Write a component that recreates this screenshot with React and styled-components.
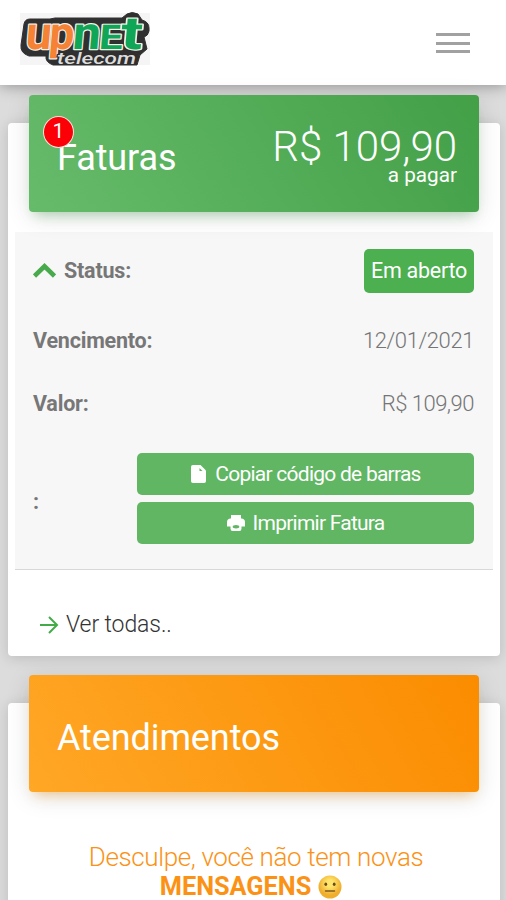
import React from 'react'
import styled, { createGlobalStyle } from 'styled-components'

const GlobalStyle = createGlobalStyle`
  * {
    box-sizing: border-box;
  }
  body {
    margin: 0;
    background: #dcdcdc;
    font-family: Roboto, 'Liberation Sans', sans-serif;
    font-weight: 300;
    color: #777;
  }
`
const Page = styled.div`
  height: 900px;
  overflow: hidden;
  display: flex;
  flex-direction: column;
`
const Header = styled.header`
  height: 85px;
  flex-shrink: 0;
  display: flex;
  justify-content: space-between;
  padding: 11px 36px 0 20px;
  background: #fff;
  box-shadow: 0 1px 14px rgba(0, 0, 0, 0.35);
`
const LogoSvg = styled.svg`
  overflow: visible;
`
const MenuButton = styled.button`
  width: 34px;
  height: 22px;
  margin-top: 22px;
  padding: 0;
  border: 0;
  background: none;
  display: flex;
  flex-direction: column;
  gap: 5.5px;
`
const MenuBar = styled.span`
  height: 3px;
  width: 100%;
  background: #a1a1a1;
`
const Content = styled.main`
  display: flex;
  flex-direction: column;
  gap: 47px;
  padding: 38px 6px 0 8px;
`
const Card = styled.section`
  height: ${({ height }) => height}px;
  flex-shrink: 0;
  padding: 0 7px;
  border-radius: 4px;
  background: #fff;
  box-shadow: 0 2px 14px rgba(0, 0, 0, 0.15);
`
const Banner = styled.div`
  position: relative;
  height: 117px;
  margin: -28px 14px 0;
  padding: 0 22px 0 28px;
  display: flex;
  justify-content: space-between;
  border-radius: 4px;
  background: ${({ from, to }) => `linear-gradient(60deg, ${from}, ${to})`};
  box-shadow: 0 5px 24px rgba(0, 0, 0, 0.12), 0 8px 12px -6px ${({ glow }) => glow};
`
const Title = styled.h2`
  margin: 0;
  padding-top: 42px;
  font-size: 36px;
  line-height: 42px;
  font-weight: 400;
  letter-spacing: -0.1px;
  color: #fff;
`
const Badge = styled.span`
  position: absolute;
  left: 14px;
  top: 21px;
  width: 31px;
  height: 32px;
  border: 1.5px solid #f6e5dc;
  border-radius: 50%;
  background: #fb0006;
  color: #fff;
  font-size: 21px;
  line-height: 29px;
  font-weight: 400;
  text-align: center;
`
const Total = styled.div`
  padding-top: 32px;
  display: flex;
  flex-direction: column;
  align-items: flex-end;
  color: #fff;
`
const Amount = styled.span`
  font-size: 42px;
  line-height: 40px;
`
const Hint = styled.span`
  margin-top: -3px;
  font-size: 20.7px;
  line-height: 22px;
  font-weight: 400;
`
const Panel = styled.div`
  height: 338px;
  margin-top: 20px;
  padding: 0 19px 0 18px;
  background: #f7f7f7;
  border-bottom: 1.5px solid #d8d8d8;
`
const Row = styled.div`
  height: ${({ height }) => height}px;
  display: flex;
  align-items: center;
  justify-content: space-between;
  font-size: 22px;
  line-height: 26px;
`
const Label = styled.span`
  display: flex;
  align-items: center;
  gap: 8px;
  font-size: 21.5px;
  font-weight: 700;
  letter-spacing: -0.2px;
`
const Value = styled.span`
  color: #757575;
  letter-spacing: ${({ spacing }) => spacing}px;
`
const Status = styled.span`
  height: 44px;
  width: 110px;
  border-radius: 5px;
  background: #4caf50;
  color: #fff;
  text-align: center;
  line-height: 43px;
  font-weight: 400;
  font-size: 21.5px;
  letter-spacing: -0.3px;
`
const Actions = styled.div`
  width: 337px;
  display: flex;
  flex-direction: column;
  gap: 7px;
  padding-bottom: 8px;
`
const ActionButton = styled.button`
  height: 42px;
  border: 0;
  padding: 0;
  border-radius: 5px;
  background: #61b663;
  color: #fff;
  display: flex;
  align-items: center;
  justify-content: center;
  gap: 8px;
  font-family: inherit;
  font-size: 21px;
  font-weight: 400;
  letter-spacing: -0.75px;
`
const SeeAll = styled.a`
  display: flex;
  align-items: center;
  gap: 7px;
  padding: 40.5px 0 0 24px;
  color: #333;
  font-size: 23px;
  line-height: 28px;
  letter-spacing: -0.1px;
`
const Empty = styled.p`
  margin: 50px 0 0;
  color: #fb9216;
  font-size: 26px;
  line-height: 30px;
  letter-spacing: -0.37px;
  text-align: center;
`
const Message = styled.span`
  display: block;
  padding-left: 4px;
`
const Strong = styled.strong`
  display: flex;
  justify-content: center;
  align-items: center;
  gap: 7px;
  padding-right: 6px;
  font-size: 25.3px;
  font-weight: 700;
  letter-spacing: 0;
`

const logoLetters = [
  { char: 'u', x: 25.5, width: 26, size: 46, color: '#f58235' },
  { char: 'p', x: 49, width: 25, size: 46, color: '#f58235' },
  { char: 'n', x: 72.5, width: 28, size: 46, color: '#10a657' },
  { char: 'E', x: 99, width: 24, size: 34, color: '#10a657' },
  { char: 't', x: 120.5, width: 22, size: 46, color: '#10a657' }
]

function Logo () {
  return (
    <LogoSvg width='130' height='56' viewBox='20 11 130 56'>
      <rect x='20' y='13' width='130' height='52' fill='#f5f5f5' />
      <path
        d='M30 19H50L55 18H76L83 18H122L127 14Q132 11 138 14L142 20Q149 22 149 28V31Q148 36 144 37L147 49L140 55L137 65H53Q45 62 46 56H29Q20 53 21 45L24 24Q25 19 30 19Z'
        fill='#303030'
        stroke='#303030'
        strokeLinejoin='round'
      />
      <g
        fontFamily='Roboto, sans-serif'
        fontWeight='700'
        strokeWidth='2.4'
        strokeLinejoin='round'
        paintOrder='stroke'
        stroke='#f3f1e8'
        transform='translate(3.6 0) skewX(-5)'
      >
        {logoLetters.map(({ char, x, width, size, color }) => (
          <text
            key={char}
            x={x}
            y='49.5'
            fontSize={size}
            fill={color}
            textLength={width}
            lengthAdjust='spacingAndGlyphs'
          >
            {char}
          </text>
        ))}
      </g>
      <text
        x='57'
        y='63.5'
        fontFamily='Roboto, sans-serif'
        fontSize='16.5'
        fontWeight='500'
        fontStyle='italic'
        fill='#ddd'
        stroke='#303030'
        strokeWidth='2'
        paintOrder='stroke'
        textLength='79'
        lengthAdjust='spacingAndGlyphs'
      >
        telecom
      </text>
    </LogoSvg>
  )
}

function ChevronUp () {
  return (
    <svg width='23' height='16' viewBox='0 0 23 16'>
      <path d='M1.5 13L11.5 3.3L21.5 13' fill='none' stroke='#48aa4c' strokeWidth='4.6' />
    </svg>
  )
}

function FileIcon () {
  return (
    <svg width='17' height='20' viewBox='0 0 17 20'>
      <path d='M3 1H10.5L16 6.5V17Q16 19 14 19H3Q1 19 1 17V3Q1 1 3 1Z' fill='#fff' />
      <path d='M9.5 4L12.5 7H9.5Z' fill='#61b663' />
    </svg>
  )
}

function PrintIcon () {
  return (
    <svg width='18' height='18' viewBox='0 0 18 18'>
      <path d='M4 1H14V4.5H15Q18 5 18 8V12.5H14.5V14.5Q14.5 17 12.5 17H5.5Q3.5 17 3.5 14.5V12.5H0V8Q0 5 3 4.5H4Z' fill='#fff' />
      <ellipse cx='9' cy='12.8' rx='3.3' ry='1.7' fill='#61b663' />
    </svg>
  )
}

function ArrowRight () {
  return (
    <svg width='20' height='18' viewBox='0 0 20 18'>
      <path d='M1 9H18M10 1L18 9L10 17' fill='none' stroke='#43ac48' strokeWidth='2' />
    </svg>
  )
}

function NeutralFace () {
  return (
    <svg width='24' height='24' viewBox='0 0 24 24'>
      <defs>
        <radialGradient id='face' cx='50%' cy='35%'>
          <stop offset='0.3' stopColor='#ffe56b' />
          <stop offset='1' stopColor='#f0ae2e' />
        </radialGradient>
      </defs>
      <circle cx='12' cy='12' r='11.5' fill='url(#face)' />
      <ellipse cx='7.8' cy='9.3' rx='1.4' ry='1.8' fill='#6b4b1b' />
      <ellipse cx='16.2' cy='9.3' rx='1.4' ry='1.8' fill='#6b4b1b' />
      <path d='M7.5 16H16.5' stroke='#80591d' strokeWidth='1.5' strokeLinecap='round' />
    </svg>
  )
}

export default function App () {
  return (
    <Page>
      <GlobalStyle />
      <Header>
        <Logo />
        <MenuButton aria-label='Menu'>
          <MenuBar />
          <MenuBar />
          <MenuBar />
        </MenuButton>
      </Header>
      <Content>
        {/* invoices */}
        <Card height={533}>
          <Banner from='#66bb6a' to='#43a047' glow='rgba(76, 175, 80, 0.4)'>
            <Title>Faturas</Title>
            <Badge>1</Badge>
            <Total>
              <Amount>R$ 109,90</Amount>
              <Hint>a pagar</Hint>
            </Total>
          </Banner>
          <Panel>
            <Row height={77}>
              <Label><ChevronUp />Status:</Label>
              <Status>Em aberto</Status>
            </Row>
            <Row height={64}>
              <Label>Vencimento:</Label>
              <Value spacing={-0.4}>12/01/2021</Value>
            </Row>
            <Row height={62}>
              <Label>Valor:</Label>
              <Value spacing={-0.5}>R$ 109,90</Value>
            </Row>
            <Row height={134}>
              <Label>:</Label>
              <Actions>
                <ActionButton><FileIcon />Copiar código de barras</ActionButton>
                <ActionButton><PrintIcon />Imprimir Fatura</ActionButton>
              </Actions>
            </Row>
          </Panel>
          <SeeAll><ArrowRight />Ver todas..</SeeAll>
        </Card>
        {/* support tickets */}
        <Card height={240}>
          <Banner from='#ffa726' to='#fb8c00' glow='rgba(255, 152, 0, 0.4)'>
            <Title>Atendimentos</Title>
          </Banner>
          <Empty>
            <Message>Desculpe, você não tem novas</Message>
            <Strong>MENSAGENS <NeutralFace /></Strong>
          </Empty>
        </Card>
      </Content>
    </Page>
  )
}
